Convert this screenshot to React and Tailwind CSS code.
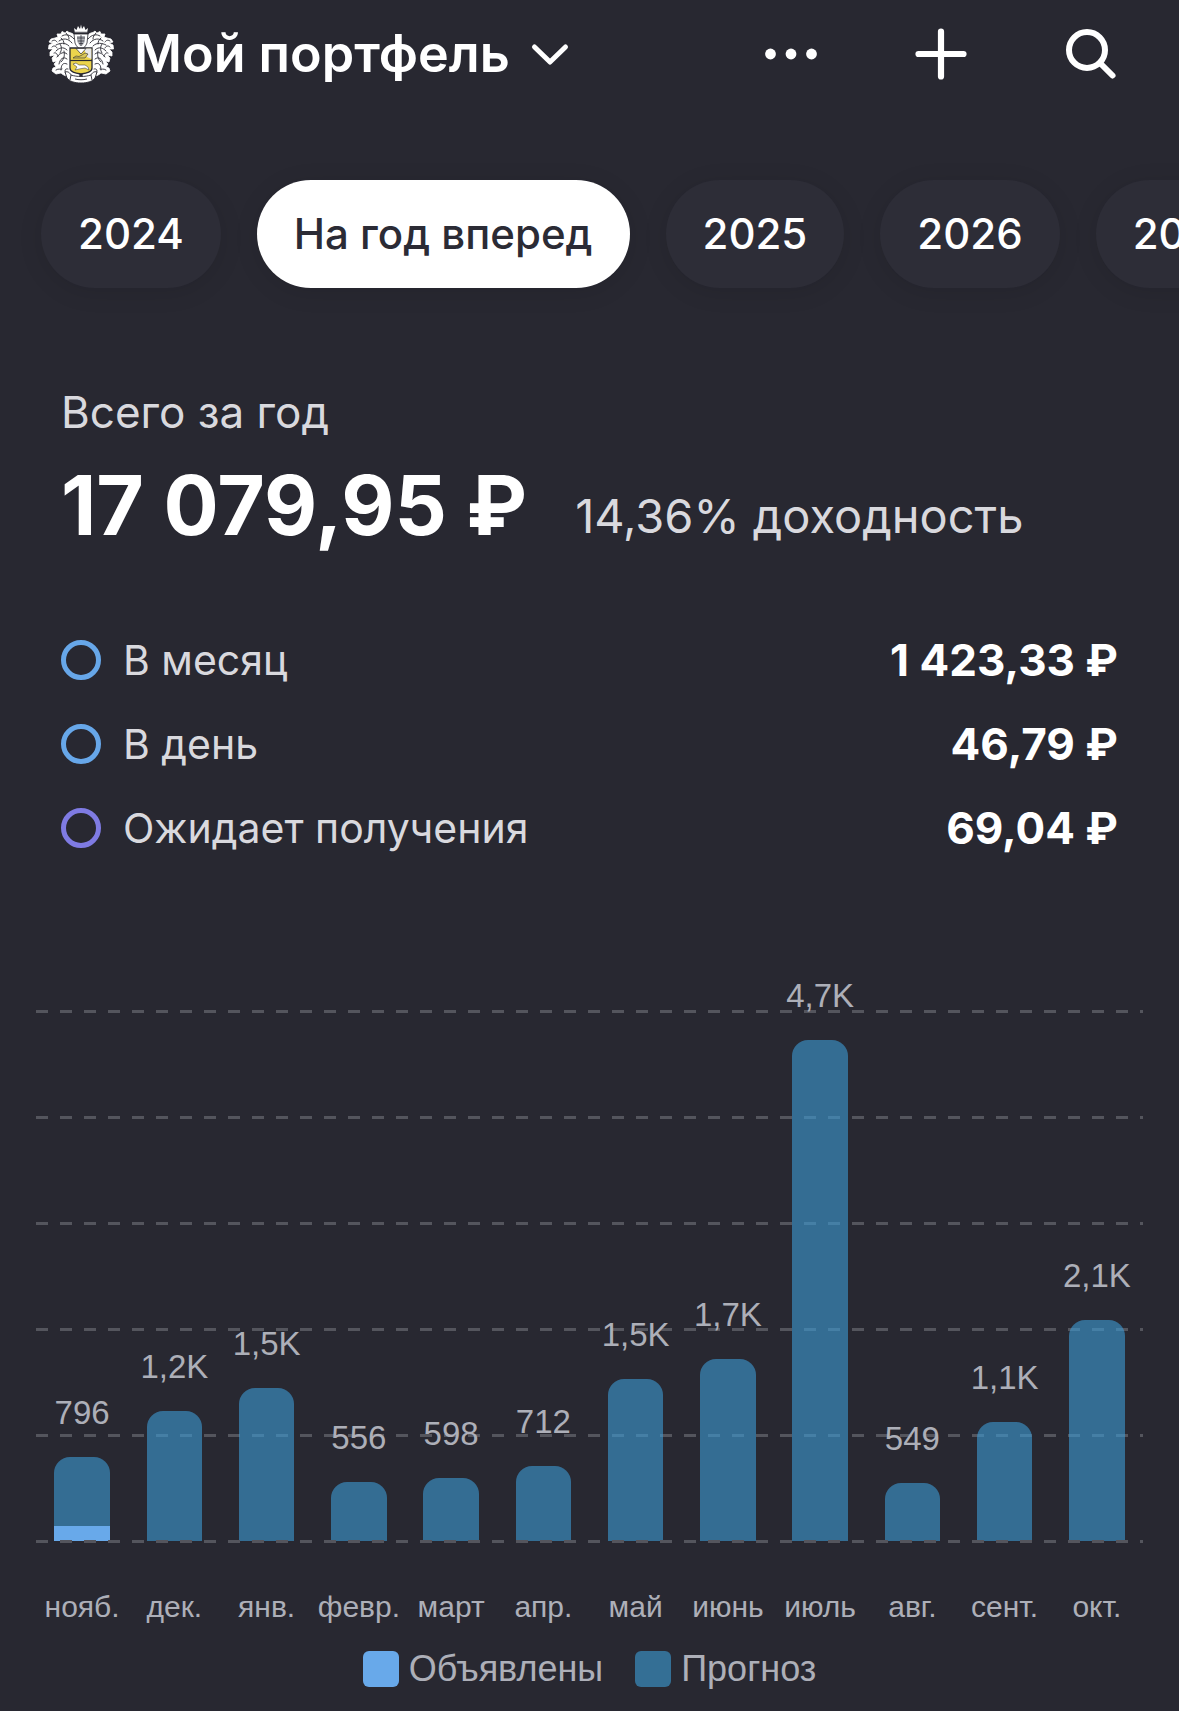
import React from "react";

const BG = "#282831";

const periods = [
  { label: "2024" },
  { label: "На год вперед", active: true },
  { label: "2025" },
  { label: "2026" },
  { label: "2027" },
];

const stats = [
  { label: "В месяц", value: "1 423,33 ₽", ring: "border-[#67a7e9]" },
  { label: "В день", value: "46,79 ₽", ring: "border-[#67a7e9]" },
  { label: "Ожидает получения", value: "69,04 ₽", ring: "border-[#7f7be3]" },
];

const AXIS_MAX = 5000;

const months = [
  { name: "нояб.", label: "796", total: 796, announced: 140 },
  { name: "дек.", label: "1,2K", total: 1222 },
  { name: "янв.", label: "1,5K", total: 1448 },
  { name: "февр.", label: "556", total: 556 },
  { name: "март", label: "598", total: 598 },
  { name: "апр.", label: "712", total: 712 },
  { name: "май", label: "1,5K", total: 1524 },
  { name: "июнь", label: "1,7K", total: 1717 },
  { name: "июль", label: "4,7K", total: 4731 },
  { name: "авг.", label: "549", total: 549 },
  { name: "сент.", label: "1,1K", total: 1126 },
  { name: "окт.", label: "2,1K", total: 2081 },
];

function Crest() {
  const half = (
    <>
      <path
        d="M30 17 C28 12 25 9 21 8.500 L19 7 L17 9 L14 7.500 L13 10 L9 10 L10 13 L7 14 L3 15 L1 18 L5 19 L1 21 L0.500 25 L5 25 L2 28 L2 32 L7 31 L4 34 L5 38 L9 37 L6 40 L8 43 L5 44 L4 47 L8 50 L13 49 C15 51 19 53 23 52 L31 54 Z"
        fill="#fff"
        stroke="#fff"
        strokeWidth="0.8"
        strokeLinejoin="round"
      />
      <path
        d="M26 15 C22 10 17 10 14 12 M24 19 C20 14 15 14 11 17 M21 22 C17 18 12 19 8 21 M13 14 C15 16 16 17 16 20 M19 26 C15 22 11 24 8 27 M19 30 C16 27 12 29 9 33 M12 20 C14 23 14 26 12 29 M19 35 C15 32 12 35 11 40 M16 27 C17 32 16 35 13 38 M19 40 C15 38 13 41 13 46 M8 46 C11 44 12 46 14 45 M20 45 C17 44 16 47 18 50 M4 17 C7 15 8 17 9 18 M4 23 C6 21 8 22 9 24 M6 29 C8 28 9 30 10 32 M18 9 C20 12 21 12 21 15"
        fill="none"
        stroke={BG}
        strokeWidth="0.9"
        strokeLinecap="round"
      />
    </>
  );
  return (
    <svg viewBox="0 0 66 60" className="h-[60px] w-[66px] shrink-0" aria-hidden="true">
      <g>{half}</g>
      <g transform="translate(66 0) scale(-1 1)">{half}</g>
      <path d="M27 9 L26 4 L28.500 6 L30 2 L32 5 L33 0.500 L34 5 L36 2 L37.500 6 L40 4 L39 9 Z" fill="#fff" />
      <path d="M27 8.300 H39" stroke={BG} strokeWidth="0.9" />
      <path d="M26 10 H40 L39 19 C38 22 35 25 33 26 C31 25 28 22 27 19 Z" fill="#fff" stroke={BG} strokeWidth="0.8" />
      <path d="M29 12 H37 V17 C36 20 34 22 33 22 C32 22 30 20 29 17 Z" fill="#aeb0b5" />
      <path d="M29 14 H37 M30 17 H36 M31 19.500 H35 M33 11 V22" stroke={BG} strokeWidth="0.7" />
      <path d="M22 24 H44 V44 C44 48 39 49 33 50 C27 49 22 48 22 44 Z" fill="#ecd44c" stroke={BG} strokeWidth="1.300" />
      <path d="M36 24.600 H43.400 V35 L39 33 Z" fill="#e9e9e9" />
      <path d="M28 24.500 L33 30 L38 24.500 Z" fill="#fff" stroke={BG} strokeWidth="0.7" />
      <path d="M22 36.500 H44" stroke={BG} strokeWidth="1.200" />
      <path d="M25 34 L28 32 L31 32.500 L34 31 L37 29 L40 30 L37 34 Z" fill="#d9c75a" stroke={BG} strokeWidth="0.600" />
      <path d="M25 40 L28 39 L31 41 L37 41 L40 43 L41 46 L37 44 L31 45 L27 46 L29 43 Z" fill="#fff" stroke={BG} strokeWidth="0.500" />
      <path
        d="M17 48 C20 47 22 49 23 51 C29 53 37 53 43 51 C44 49 46 47 49 48 L47 54 C45 57 40 59 33 59 C26 59 21 57 19 54 Z"
        fill="#fff"
        stroke={BG}
        strokeWidth="0.9"
      />
      <path d="M23 51 L22 56 M43 51 L44 56 M27 55 C31 56 35 56 39 55" fill="none" stroke={BG} strokeWidth="0.9" />
    </svg>
  );
}

function Header() {
  return (
    <header className="flex h-[108px] items-center justify-between pr-[61px] pl-12">
      <button type="button" className="flex items-center gap-5 text-[52px] leading-[60px] font-semibold whitespace-nowrap text-white">
        <Crest />
        <span>Мой портфель</span>
        <svg viewBox="0 0 40 24" className="h-6 w-10" fill="none" stroke="currentColor" strokeWidth="5" strokeLinecap="round" strokeLinejoin="round" aria-hidden="true">
          <path d="M4.500 5 L20 20 L35.500 5" />
        </svg>
      </button>
      <div className="flex items-center gap-24 text-white">
        <button type="button" aria-label="Ещё">
          <svg viewBox="0 0 54 54" className="size-[54px]" fill="currentColor" aria-hidden="true">
            <circle cx="6.500" cy="27" r="5.400" />
            <circle cx="27" cy="27" r="5.400" />
            <circle cx="47.500" cy="27" r="5.400" />
          </svg>
        </button>
        <button type="button" aria-label="Добавить">
          <svg viewBox="0 0 54 54" className="size-[54px]" fill="none" stroke="currentColor" strokeWidth="6.200" strokeLinecap="round" aria-hidden="true">
            <path d="M27 4.500 V49.500 M4.500 27 H49.500" />
          </svg>
        </button>
        <button type="button" aria-label="Поиск">
          <svg viewBox="0 0 54 54" className="size-[54px]" fill="none" stroke="currentColor" strokeWidth="6" strokeLinecap="round" aria-hidden="true">
            <circle cx="23" cy="23" r="18" />
            <path d="M36.500 36.500 L48.500 48.500" />
          </svg>
        </button>
      </div>
    </header>
  );
}

function Periods() {
  return (
    <nav className="mt-6 flex gap-9 overflow-hidden py-12 pl-[41px]" aria-label="Период">
      {periods.map((p) => (
        <button
          key={p.label}
          type="button"
          aria-pressed={Boolean(p.active)}
          className={
            "h-[108px] shrink-0 rounded-full px-[37px] text-[42px] leading-[52px] font-medium whitespace-nowrap shadow-[0_4px_24px_rgba(0,0,0,0.1)] " +
            (p.active ? "bg-white text-[#2b2b35]" : "bg-[#2d2d37] text-white")
          }
        >
          {p.label}
        </button>
      ))}
    </nav>
  );
}

function Summary() {
  return (
    <section className="mt-12 px-[61px]">
      <h2 className="text-[44px] leading-[56px] text-[#d9d9de]">Всего за год</h2>
      <div className="mt-[18px] flex items-end gap-12 whitespace-nowrap">
        <strong className="text-[82px] leading-[96px] font-bold text-white">17 079,95 ₽</strong>
        <span className="text-[47px] leading-[76px] text-[#d9d9de]">14,36% доходность</span>
      </div>
      <dl className="mt-16">
        {stats.map((s) => (
          <div key={s.label} className="flex h-[84px] items-center">
            <span className={"size-10 shrink-0 rounded-full border-5 " + s.ring} />
            <dt className="ml-[22px] text-[41px] leading-[52px] text-[#d9d9de]">{s.label}</dt>
            <dd className="ml-auto text-[44px] leading-[52px] font-bold text-white">{s.value}</dd>
          </div>
        ))}
      </dl>
    </section>
  );
}

function GridLine() {
  return (
    <div className="h-[3px] bg-[repeating-linear-gradient(90deg,#54555d_0px,#54555d_12px,transparent_12px,transparent_24px)]" />
  );
}

function Chart() {
  return (
    <section className="mt-[140px] px-9 font-['Liberation_Sans',Arial,sans-serif] text-[#adafb8]" aria-label="Выплаты по месяцам">
      <div className="grid">
        <div className="col-start-1 row-start-1 flex h-[533px] flex-col justify-between">
          {[5, 4, 3, 2, 1].map((n) => (
            <GridLine key={n} />
          ))}
          <div className="h-[3px]" />
        </div>
        <div className="col-start-1 row-start-1 mt-[1px] mb-[2px] grid h-[530px] grid-cols-12">
          {months.map((m) => (
            <div key={m.name} className="flex h-full flex-col items-center justify-end">
              <span className="mb-[26px] h-9 text-[33px] leading-9">{m.label}</span>
              <div
                className="flex w-3/5 shrink-0 flex-col overflow-hidden rounded-t-2xl"
                style={{ height: `${(m.total / AXIS_MAX) * 100}%` }}
              >
                <div className="flex-1 bg-[#3c9bd6]/60" />
                {m.announced && (
                  <div className="bg-[#68a9ea]" style={{ height: `${(m.announced / m.total) * 100}%` }} />
                )}
              </div>
            </div>
          ))}
        </div>
        <div className="col-start-1 row-start-1 self-end">
          <GridLine />
        </div>
      </div>
      <div className="mt-[46px] grid grid-cols-12 text-[30px] leading-9 whitespace-nowrap">
        {months.map((m) => (
          <span key={m.name} className="flex justify-center">
            {m.name}
          </span>
        ))}
      </div>
      <div className="mt-6 flex justify-center gap-8 pb-5 text-[36px] leading-10">
        <span className="flex items-center gap-[10px]">
          <i className="size-9 rounded-md bg-[#68a9ea]" />
          Объявлены
        </span>
        <span className="flex items-center gap-[10px]">
          <i className="size-9 rounded-md bg-[#346f95]" />
          Прогноз
        </span>
      </div>
    </section>
  );
}

export default function App() {
  return (
    <main className="min-h-screen overflow-hidden bg-[#282831] font-[Inter,sans-serif]">
      <Header />
      <Periods />
      <Summary />
      <Chart />
    </main>
  );
}
